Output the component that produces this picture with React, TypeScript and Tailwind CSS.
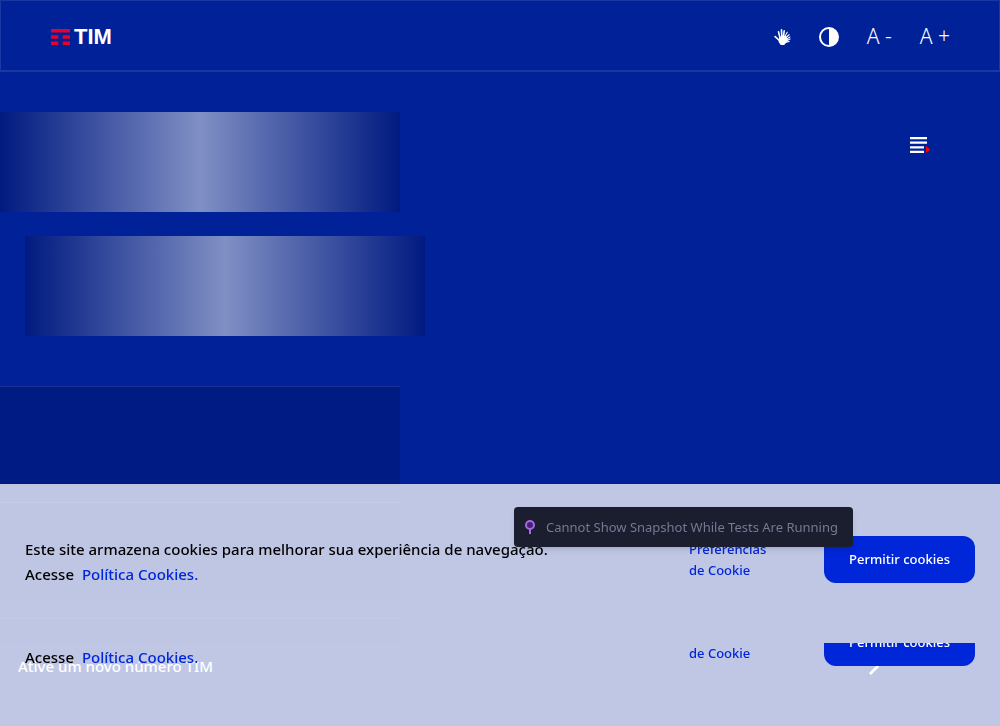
import { ReactNode } from 'react';

function Logo() {
  return (
    <a href="#inicio" aria-label="TIM" className="flex items-center gap-1">
      <svg width="19" height="16" viewBox="0 0 19 16" fill="#eb0028" aria-hidden="true">
        <path d="M0 0h19v3.4H0zM0 6.2h7.3v3.6H0zM11.7 6.2H19v3.6h-7.3zM0 12.5h7.3V16H0zM11.7 12.5H19V16h-7.3z" />
      </svg>
      <span className="font-['Liberation_Sans',sans-serif] text-[22px] leading-6 font-bold text-white">TIM</span>
    </a>
  );
}

function HandIcon() {
  return (
    <svg width="17" height="18" viewBox="0 0 18 18" fill="none" stroke="#fff" strokeLinecap="round" aria-hidden="true">
      <path d="M6 10 9 8 12.5 9 14 12.5 10.5 16.8H7.5L5.5 14z" fill="#fff" strokeWidth="1.4" strokeLinejoin="round" />
      <path d="M6 13 1.2 8.6M6.3 10 4.8 3.5M8.3 9 7.9 1.4M10 9 10.8 2.4" strokeWidth="1.7" />
      <path d="M11.2 9 14 4M12 10 16 6.6M12.8 11.5 16.8 9M13 13 17 11.2M13 14.6 16 13.6" strokeWidth="1.2" />
    </svg>
  );
}

function ContrastIcon() {
  return (
    <svg width="20" height="20" viewBox="0 0 20 20" aria-hidden="true">
      <circle cx="10" cy="10" r="9" fill="none" stroke="#fff" strokeWidth="2" />
      <path d="M10 1a9 9 0 0 1 0 18z" fill="#fff" />
    </svg>
  );
}

function MenuIcon() {
  return (
    <svg width="20" height="16" viewBox="0 0 20 16" aria-hidden="true">
      <path d="M0 0h17v2.2H0zM0 4.6h17v2.2H0zM0 9.2h14v2.2H0zM0 13.8h14V16H0z" fill="#fff" />
      <path d="M16 9 20 12.5 16 16z" fill="#f00" />
    </svg>
  );
}

function IconButton({ label, children }: { label: string; children: ReactNode }) {
  return (
    <button type="button" aria-label={label} className="flex h-8 cursor-pointer items-center text-[21px] font-light text-white">
      {children}
    </button>
  );
}

function Skeleton() {
  return <div className="h-[100px] w-[400px] bg-[linear-gradient(to_right,#001a80,#808fc4,#001a80)]" />;
}

function CookieBar() {
  return (
    <div className="flex h-[159px] w-full shrink-0 items-start bg-white/75 px-[25px] pt-[52px]">
      <p className="flex-1 pt-px text-[15px] leading-[25px] font-medium text-black">
        Este site armazena cookies para melhorar sua experiência de navegação.
        <br />
        Acesse{' '}
        <a href="#politica" className="ml-1 text-[#0026d9]">
          Política Cookies.
        </a>
      </p>
      <a href="#preferencias" className="mr-[35px] w-[100px] pt-[3px] text-[13px] leading-[21px] font-medium text-[#0026d9]">
        Preferências
        <br />
        de Cookie
      </a>
      <button type="button" className="h-[47px] w-[151px] cursor-pointer rounded-xl bg-[#0026d9] text-[13px] font-medium text-white">
        Permitir cookies
      </button>
    </div>
  );
}

export default function App() {
  return (
    <div className="min-h-screen overflow-hidden bg-[#002198] font-['Noto_Sans',sans-serif]">
      <header className="flex h-[72px] items-center justify-between border border-b-2 border-white/10 pt-[3px] pr-[49px] pl-[50px]">
        <Logo />
        <nav aria-label="Acessibilidade" className="flex items-center gap-7">
          <IconButton label="Libras"><HandIcon /></IconButton>
          <IconButton label="Contraste"><ContrastIcon /></IconButton>
          <IconButton label="Diminuir texto">A -</IconButton>
          <IconButton label="Aumentar texto">A +</IconButton>
        </nav>
      </header>

      <main className="pt-10">
        <div className="flex items-start justify-between pr-[70px]">
          <Skeleton />
          <button type="button" aria-label="Menu" className="mt-[25px] cursor-pointer">
            <MenuIcon />
          </button>
        </div>
        <div className="mt-6 pl-[25px]">
          <Skeleton />
        </div>
        <div className="mt-[50px] flex w-[400px] flex-col gap-4">
          <div className="h-[100px] border-t border-white/10 bg-[#001b84]" />
          <div className="h-[100px] border-t border-white/10 bg-[#001d8e]" />
          <div className="h-[25px] border-t border-white/10 bg-[#001d8e]" />
        </div>
        <a href="#ativar" className="flex h-[46px] items-center justify-between pr-[121px] pl-[18px] text-[15px] font-medium text-white">
          Ative um novo número TIM
          <svg width="10" height="18" viewBox="0 0 10 18" fill="none" stroke="#fff" strokeWidth="2.8" aria-hidden="true">
            <path d="M1 1l8 8-8 8" />
          </svg>
        </a>
      </main>

      <aside aria-label="Cookies" className="fixed inset-x-0 bottom-0">
        <CookieBar />
        <div className="flex h-[83px] items-end overflow-hidden">
          <CookieBar />
        </div>
      </aside>

      <div role="status" className="fixed bottom-[179px] left-[514px] flex h-10 items-center gap-[10px] rounded bg-[#1b1e2e] pt-0.5 pr-[15px] pl-[10px] text-[13px] whitespace-nowrap text-[#747994] shadow-md">
        <svg width="12" height="16" viewBox="0 0 12 16" aria-hidden="true">
          <path d="M6 8v6" stroke="#a468e0" strokeWidth="2" />
          <circle cx="6" cy="5" r="4" fill="#4c1b80" stroke="#a468e0" strokeWidth="2" />
        </svg>
        Cannot Show Snapshot While Tests Are Running
      </div>
    </div>
  );
}
